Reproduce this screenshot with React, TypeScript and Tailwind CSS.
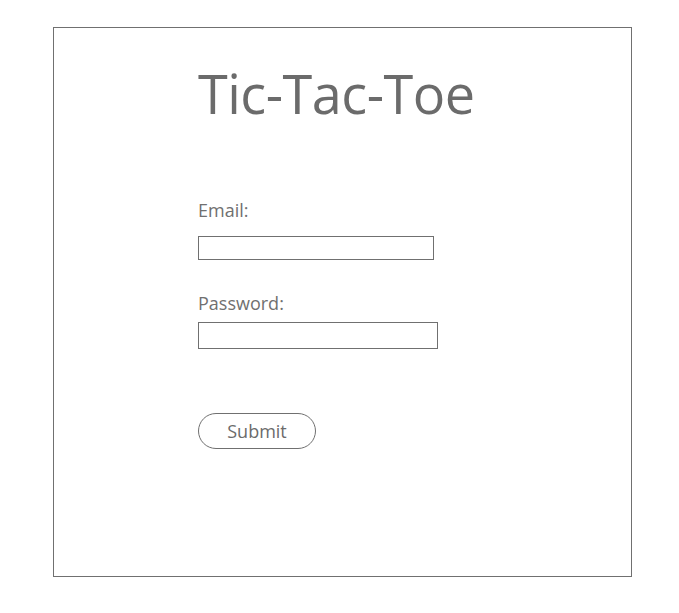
import React from "react";

export default function App() {
  return (
    <div className="w-[679px] h-[613px] bg-white pt-[27px] pl-[53px]" style={{ fontFamily: '"Open Sans", "Noto Sans", sans-serif' }}>
      <div className="w-[579px] h-[550px] border border-[#707070] pl-[144px] text-[#6b6b6b]">
        <h1 className="mt-[29px] text-[54px] leading-[72px] font-normal tracking-[-0.5px]">Tic-Tac-Toe</h1>
        <form className="mt-[69px] flex flex-col items-start" onSubmit={(e) => e.preventDefault()}>
          <label className="text-[18px] leading-[24px] text-[#707070]">Email:</label>
          <input type="text" className="mt-[14px] w-[236px] h-[24px] border border-[#707070] outline-none" />
          <label className="mt-[31px] text-[18px] leading-[24px] text-[#707070]">Password:</label>
          <input type="password" className="mt-[7px] w-[240px] h-[27px] border border-[#707070] outline-none" />
          <button type="submit" className="mt-[64px] w-[118px] h-[36px] rounded-full border border-[#707070] text-[18px] text-[#6b6b6b] bg-white">Submit</button>
        </form>
      </div>
    </div>
  );
}
